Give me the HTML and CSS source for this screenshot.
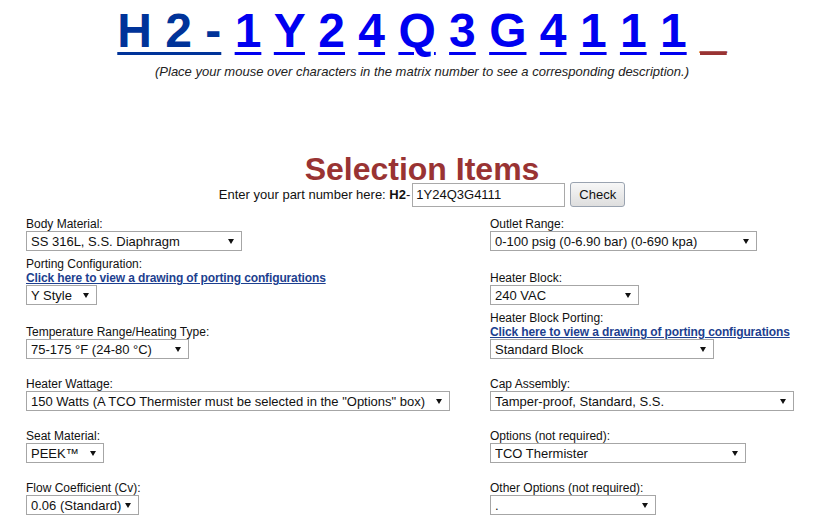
FILE: index.html
```html
<!DOCTYPE html>
<html lang="en">
<head>
    <meta charset="UTF-8">
    <meta name="viewport" content="width=device-width, initial-scale=1.0">
    <title>H2 Selection</title>
    <link rel="stylesheet" href="styles.css">
</head>
<body>
    <div class="top">
        <div class="matrix">
            <a class="prefix" href="#">H 2 -</a> <a class="ch" href="#">1</a> <a class="ch" href="#">Y</a> <a class="ch" href="#">2</a> <a class="ch" href="#">4</a> <a class="ch" href="#">Q</a> <a class="ch" href="#">3</a> <a class="ch" href="#">G</a> <a class="ch" href="#">4</a> <a class="ch" href="#">1</a> <a class="ch" href="#">1</a> <a class="ch" href="#">1</a> <span class="blank">_</span>
        </div>
        <p class="hint">(Place your mouse over characters in the matrix number to see a corresponding description.)</p>

        <h1 class="title">Selection Items</h1>
        <form class="part-form" action="#">
            <span>Enter your part number here: <b>H2</b>-</span>
            <input type="text" name="part" value="1Y24Q3G4111">
            <button type="button">Check</button>
        </form>
    </div>

    <div class="fields">
        <div class="field">
            <label>Body Material:</label>
            <span class="sel"><select class="w-body"><option>SS 316L, S.S. Diaphragm</option></select></span>
        </div>
        <div class="field">
            <label>Outlet Range:</label>
            <span class="sel"><select class="w-outlet"><option>0-100 psig (0-6.90 bar) (0-690 kpa)</option></select></span>
        </div>

        <div class="field">
            <label>Porting Configuration:</label>
            <a class="drawing" href="#">Click here to view a drawing of porting configurations</a>
            <span class="sel"><select class="w-porting"><option>Y Style</option></select></span>
        </div>
        <div class="field">
            <label>Heater Block:</label>
            <span class="sel"><select class="w-block"><option>240 VAC</option></select></span>
        </div>

        <div class="field">
            <label>Temperature Range/Heating Type:</label>
            <span class="sel"><select class="w-temp"><option>75-175 &deg;F (24-80 &deg;C)</option></select></span>
        </div>
        <div class="field">
            <label>Heater Block Porting:</label>
            <a class="drawing" href="#">Click here to view a drawing of porting configurations</a>
            <span class="sel"><select class="w-blockport"><option>Standard Block</option></select></span>
        </div>

        <div class="field">
            <label>Heater Wattage:</label>
            <span class="sel"><select class="w-watt"><option>150 Watts (A TCO Thermister must be selected in the "Options" box)</option></select></span>
        </div>
        <div class="field">
            <label>Cap Assembly:</label>
            <span class="sel"><select class="w-cap"><option>Tamper-proof, Standard, S.S.</option></select></span>
        </div>

        <div class="field">
            <label>Seat Material:</label>
            <span class="sel"><select class="w-seat"><option>PEEK&trade;</option></select></span>
        </div>
        <div class="field">
            <label>Options (not required):</label>
            <span class="sel"><select class="w-options"><option>TCO Thermister</option></select></span>
        </div>

        <div class="field">
            <label>Flow Coefficient (Cv):</label>
            <span class="sel"><select class="w-flow"><option>0.06 (Standard)</option></select></span>
        </div>
        <div class="field">
            <label>Other Options (not required):</label>
            <span class="sel"><select class="w-other"><option>.</option></select></span>
        </div>
    </div>
</body>
</html>
```

FILE: styles.css
```css
body {
    margin: 0;
    padding: 0;
    background: #fff;
    color: #111;
    font-family: "Liberation Sans", Arial, sans-serif;
}

/* top part is centred a bit right of the window */
.top {
    padding-left: 30px;
    text-align: center;
}

.matrix {
    padding-top: 3px;
    font-size: 48px;
    font-weight: bold;
    line-height: 55px;
    white-space: nowrap;
}
.matrix a {
    text-decoration: underline;
    text-decoration-thickness: 3px;
    text-underline-offset: 5px;
}
.matrix .prefix {
    color: #003399;
}
.matrix .ch {
    color: #0000f0;
}
.matrix .blank {
    color: #993333;
    text-decoration: underline;
    text-decoration-thickness: 3px;
    text-underline-offset: 5px;
}

.hint {
    margin: 6px 0 0 0;
    font-size: 13px;
    font-style: italic;
    line-height: 15px;
    color: #222;
}

.title {
    margin: 77px 0 0 0;
    font-size: 32px;
    line-height: 26px;
    color: #993333;
}

.part-form {
    display: flex;
    justify-content: center;
    align-items: center;
    gap: 2px;
    margin: 0;
    height: 25px;
    font-size: 13px;
}
.part-form input {
    width: 153px;
    height: 24px;
    box-sizing: border-box;
    margin: 0 3px 0 0;
    padding: 0 3px;
    border: 1px solid #a9a9a9;
    font-family: inherit;
    font-size: 13px;
    color: #111;
}
.part-form button {
    height: 25px;
    padding: 0 8px;
    border: 1px solid #9aa3b0;
    border-radius: 3px;
    background: linear-gradient(#f7f7f7, #dedede);
    font-family: inherit;
    font-size: 13px;
    color: #111;
}

.fields {
    display: grid;
    grid-template-columns: 464px 1fr;
    grid-auto-rows: minmax(46px, auto);
    row-gap: 6px;
    align-items: end;
    margin-top: -2px;
    padding-left: 26px;
}
.field {
    display: flex;
    flex-direction: column;
    align-items: flex-start;
}
.field label {
    font-size: 12px;
    line-height: 14px;
    color: #111;
}
.drawing {
    font-size: 12px;
    font-weight: bold;
    line-height: 14px;
    letter-spacing: -0.13px;
    color: #1d3f8f;
}

.sel {
    position: relative;
    display: inline-block;
}
.sel select {
    -webkit-appearance: none;
    appearance: none;
    display: block;
    height: 20px;
    margin: 0;
    padding: 0 10px 0 4px;
    border: 1px solid #a6a6a6;
    border-radius: 0;
    background: #fff;
    font-family: inherit;
    font-size: 13px;
    color: #111;
}
.sel::after {
    content: "";
    position: absolute;
    right: 8px;
    top: 8px;
    border-left: 3px solid transparent;
    border-right: 3px solid transparent;
    border-top: 5px solid #111;
    pointer-events: none;
}

.w-body { width: 216px; }
.w-porting { width: 71px; }
.w-temp { width: 163px; }
.w-watt { width: 424px; }
.w-seat { width: 78px; }
.w-flow { width: 113px; }
.w-outlet { width: 267px; }
.w-block { width: 149px; }
.w-blockport { width: 224px; }
.w-cap { width: 304px; }
.w-options { width: 256px; }
.w-other { width: 166px; }
```
